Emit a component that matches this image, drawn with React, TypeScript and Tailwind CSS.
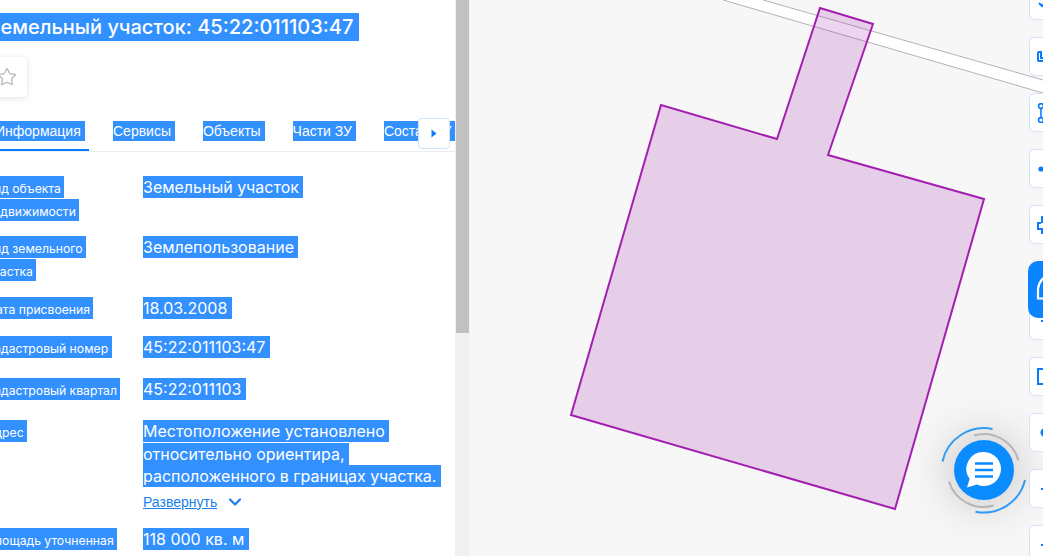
import { ChevronDown, Star } from "lucide-react";
import type { ReactNode } from "react";

const BLUE = "bg-[#3390ff]";

// выделенная строка: подсветка на всю высоту строки, как при выделении в браузере
function Sel({ children, h = "leading-[22px]" }: { children: ReactNode; h?: string }) {
  return (
    <span className={`block w-fit whitespace-pre text-white ${BLUE} ${h}`}>
      {children}
    </span>
  );
}

function Row({
  label,
  value,
  className,
  children,
}: {
  label: string[];
  value: string[];
  className: string;
  children?: ReactNode;
}) {
  return (
    <div className={`flex ${className}`}>
      <div className="w-[157px] shrink-0 text-[12.2px]">
        {label.map((l, i) => (
          <span key={l} className={i > 0 ? "mt-px block" : "block"}>
            <Sel h="pt-[3px] leading-[19px]">{l + "\u00a0"}</Sel>
          </span>
        ))}
      </div>
      <div className="min-w-0 flex-1 text-[16px]">
        {value.map((v, i) => (
          <span key={v} className={i === 1 ? "mt-px block" : "block"}>
            <Sel>{v + "\u00a0"}</Sel>
          </span>
        ))}
        {children}
      </div>
    </div>
  );
}

function Tool({ icon, className = "" }: { icon?: ReactNode; className?: string }) {
  return (
    <div
      className={`flex h-[39px] w-[48px] shrink-0 items-center rounded-md border border-[#cfe4fb] bg-white pl-[7px] text-[#0a7cff] ${className}`}
    >
      {icon}
    </div>
  );
}

function SidePanel() {
  return (
    <div className="h-full w-[455px] shrink-0 overflow-hidden bg-white">
      <div className="-ml-[12px] mt-[13px] w-[467px]">
        <h1 className="text-[20px] font-medium">
          <Sel h="leading-[28px]">Земельный участок: 45:22:011103:47{"\u00a0"}</Sel>
        </h1>

        <div className="mt-[16px] flex h-[40px] w-[39px] items-center justify-end rounded bg-white pr-[10px] shadow-[0_1px_6px_rgba(0,0,0,0.12)]">
          <Star size={20} strokeWidth={1.5} className="text-[#b5b5b5]" />
        </div>

        <div className="relative mt-[20px] h-[35px] border-b border-[#e8eef3] text-[14px]">
          <div className="flex h-[34px] gap-[28px] overflow-hidden pl-[7px] [font-family:'Liberation_Sans',sans-serif]">
            <div className="-mr-[4px] h-[34px] w-[94px] shrink-0 border-b-2 border-[#0a7cff]">
              <span className="mt-[4px] block w-fit bg-[#3390ff] leading-[20px] text-white">
                Информация{"\u00a0"}
              </span>
            </div>
            {["Сервисы", "Объекты", "Части ЗУ", "Состав ЗУ"].map((t) => (
              <div key={t} className="shrink-0 pt-[4px]">
                <Sel h="leading-[20px]">{t + "\u00a0"}</Sel>
              </div>
            ))}
          </div>
          <div className="absolute left-[430px] top-[1px] flex h-[31px] w-[32px] items-center justify-center rounded border border-[#cfe4fb] bg-white">
            <svg width="6" height="9" viewBox="0 0 6 9" className="fill-[#0a7cff]">
              <path d="M0.5 0.5 5.5 4.5 0.5 8.5z" />
            </svg>
          </div>
        </div>

        <div className="-ml-[2px] mt-[24px]">
          <Row label={["Вид объекта", "недвижимости"]} value={["Земельный участок"]} className="mb-[15px]" />
          <Row label={["Вид земельного", "участка"]} value={["Землепользование"]} className="mb-[16px]" />
          <Row label={["Дата присвоения"]} value={["18.03.2008"]} className="mb-[17px]" />
          <Row label={["Кадастровый номер"]} value={["45:22:011103:47"]} className="mb-[20px]" />
          <Row label={["Кадастровый квартал"]} value={["45:22:011103"]} className="mb-[20px]" />
          <Row
            label={["Адрес"]}
            value={["Местоположение установлено", "относительно ориентира,", "расположенного в границах участка."]}
            className="mb-[15px]"
          >
            <div className="mt-[4px] flex h-[22px] items-center text-[14px] text-[#1a7fe8] [font-family:'Liberation_Sans',sans-serif]">
              <span className="underline">Развернуть</span>
              <ChevronDown size={20} strokeWidth={2.6} className="ml-[8px]" />
            </div>
          </Row>
          <Row label={["Площадь уточненная"]} value={["118 000 кв. м"]} className="" />
        </div>
      </div>
    </div>
  );
}

function Scrollbar() {
  return (
    <div className="h-full w-[15px] shrink-0 bg-[#f1f1f1] pl-px">
      <div className="h-[333px] w-[13px] bg-[#c1c1c1]" />
    </div>
  );
}

function MapView() {
  return (
    <div className="relative h-full min-w-0 flex-1 overflow-hidden bg-[#f7f7f7]">
      <svg viewBox="470 0 573 556" className="absolute inset-0 h-[556px] w-[573px]">
        <polygon points="723,0 763,0 1043,80 1043,93" fill="#ffffff" />
        <path d="M723 0 1043 93M763 0 1043 80" stroke="#b3b3b3" strokeWidth="1" fill="none" />
        <polygon
          points="820,8 873,24 828,155 984,199 895,509 571,415 661,105 777,139"
          fill="#a020b0"
          fillOpacity="0.19"
          stroke="#a31fb0"
          strokeWidth="2"
        />
      </svg>

      {/* кнопка чата с кольцами */}
      <div className="absolute left-[484px] top-[440px] flex h-[60px] w-[60px] items-center justify-center rounded-full bg-[#0a8cff] shadow-[0_0_50px_rgba(0,0,0,0.28)]">
        <svg viewBox="-45 -45 90 90" className="absolute -inset-[15px] h-[90px] w-[90px]" fill="none" strokeWidth="2">
          <path d="M-41.5 -8.5A42.5 42.5 0 0 1 8.5 -41" stroke="#2f9bf5" />
          <path d="M41 10A42.5 42.5 0 0 1 -8.5 41.7" stroke="#2f9bf5" />
          <path d="M-10 -34.5A36 36 0 0 1 34.5 -9.5" stroke="#b5b5b5" />
          <path d="M-35 11.5A36 36 0 0 0 9.5 35.5" stroke="#b5b5b5" />
        </svg>
        <svg viewBox="0 0 36 38" className="relative h-[38px] w-[36px]">
          <path d="M18 1a17 17 0 1 1-7 32.5L1 36.5l2.6-8.5A17 17 0 0 1 18 1z" fill="#ffffff" />
          <path d="M9 12.5h18M9 19h18M9 25.5h18" stroke="#0a8cff" strokeWidth="2.6" />
        </svg>
      </div>

      {/* панель инструментов у правого края */}
      <div className="absolute left-[559px] top-[-19px] flex flex-col gap-[17px]">
        <Tool
          icon={
            <svg width="8" height="8" viewBox="0 0 8 8" className="ml-[1px] mt-[6px] fill-none stroke-current" strokeWidth="2">
              <path d="M1 3 4 6 7 3" />
            </svg>
          }
        />
        <Tool
          icon={
            <svg width="10" height="11" viewBox="0 0 10 11" className="fill-none stroke-current" strokeWidth="2">
              <path d="M10 10H2a1 1 0 0 1-1-1V2a1 1 0 0 1 1-1h2v6h6" />
            </svg>
          }
        />
        <Tool
          icon={
            <svg width="8" height="20" viewBox="0 0 8 20" className="fill-none stroke-current" strokeWidth="1.6">
              <circle cx="4" cy="3" r="2.4" />
              <circle cx="4" cy="17" r="2.4" />
              <path d="M4 6v8" />
            </svg>
          }
        />
        <Tool
          icon={
            <svg width="6" height="6" viewBox="0 0 6 6" className="ml-[1px] fill-current">
              <circle cx="3" cy="3" r="2.6" />
            </svg>
          }
        />
        <Tool
          icon={
            <svg width="8" height="18" viewBox="0 0 8 18" className="fill-none stroke-current" strokeWidth="2">
              <path d="M8 6H5V1h3M8 17H5v-4H1V7h3" />
            </svg>
          }
        />
        <Tool className="mt-[40px]" icon={<span className="ml-[4px] h-[2px] w-[3px] bg-current" />} />
        <Tool
          icon={
            <svg width="8" height="17" viewBox="0 0 8 17" className="fill-none stroke-current" strokeWidth="2">
              <path d="M8 1H1v15h7" />
            </svg>
          }
        />
        <Tool
          icon={
            <svg width="6" height="9" viewBox="0 0 6 9" className="ml-[2px] fill-current">
              <path d="M6 0A4.5 4.5 0 0 0 6 9z" />
            </svg>
          }
        />
        <Tool icon={<span className="ml-[4px] h-[2px] w-[3px] bg-current" />} />
        <Tool icon={<span className="ml-[4px] h-[2px] w-[3px] bg-current" />} />
      </div>

      {/* активная кнопка поверх панели */}
      <div className="absolute left-[558px] top-[261px] flex h-[57px] w-[50px] items-center rounded-[10px] bg-[#0a84ff] pl-[8px]">
        <svg width="16" height="34" viewBox="0 0 16 34" className="fill-none stroke-white" strokeWidth="2.2">
          <path d="M16 2C8 2 3 8 2 16v9.5h14" />
        </svg>
      </div>
    </div>
  );
}

export default function App() {
  return (
    <div className="flex h-[556px] w-[1043px] overflow-hidden [font-family:Inter,'Liberation_Sans',sans-serif]">
      <SidePanel />
      <Scrollbar />
      <MapView />
    </div>
  );
}
